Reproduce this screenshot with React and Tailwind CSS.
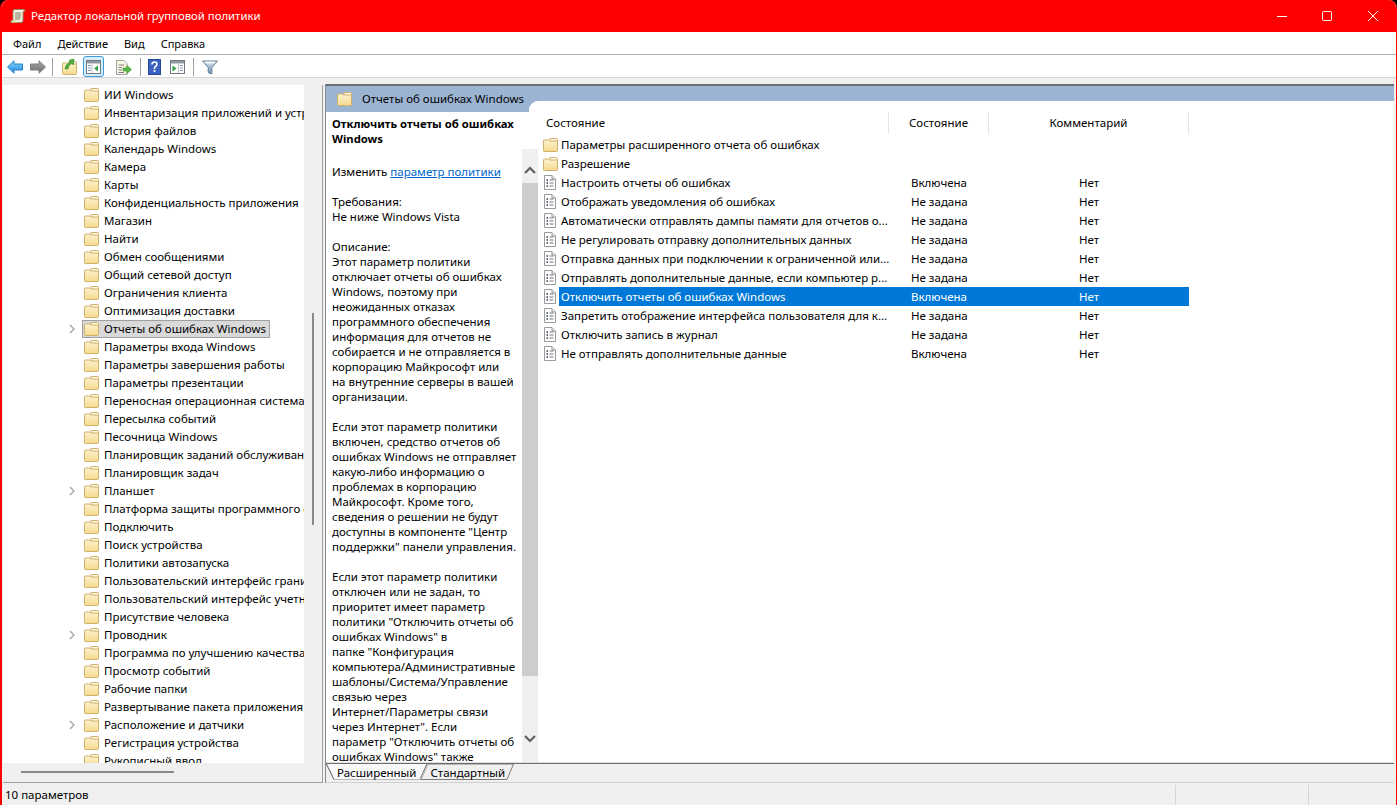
import React from "react";

const treeItems = [
  ["ИИ Windows"],
  ["Инвентаризация приложений и устройств"],
  ["История файлов"],
  ["Календарь Windows"],
  ["Камера"],
  ["Карты"],
  ["Конфиденциальность приложения"],
  ["Магазин"],
  ["Найти"],
  ["Обмен сообщениями"],
  ["Общий сетевой доступ"],
  ["Ограничения клиента"],
  ["Оптимизация доставки"],
  ["Отчеты об ошибках Windows", true, true],
  ["Параметры входа Windows"],
  ["Параметры завершения работы"],
  ["Параметры презентации"],
  ["Переносная операционная система"],
  ["Пересылка событий"],
  ["Песочница Windows"],
  ["Планировщик заданий обслуживания"],
  ["Планировщик задач"],
  ["Планшет", true],
  ["Платформа защиты программного обеспечения"],
  ["Подключить"],
  ["Поиск устройства"],
  ["Политики автозапуска"],
  ["Пользовательский интерфейс границ"],
  ["Пользовательский интерфейс учетных записей"],
  ["Присутствие человека"],
  ["Проводник", true],
  ["Программа по улучшению качества"],
  ["Просмотр событий"],
  ["Рабочие папки"],
  ["Развертывание пакета приложения"],
  ["Расположение и датчики", true],
  ["Регистрация устройства"],
  ["Рукописный ввод"],
];

const policies = [
  ["Настроить отчеты об ошибках", "Включена"],
  ["Отображать уведомления об ошибках", "Не задана"],
  ["Автоматически отправлять дампы памяти для отчетов о...", "Не задана"],
  ["Не регулировать отправку дополнительных данных", "Не задана"],
  ["Отправка данных при подключении к ограниченной или...", "Не задана"],
  ["Отправлять дополнительные данные, если компьютер р...", "Не задана"],
  ["Отключить отчеты об ошибках Windows", "Включена", true],
  ["Запретить отображение интерфейса пользователя для к...", "Не задана"],
  ["Отключить запись в журнал", "Не задана"],
  ["Не отправлять дополнительные данные", "Включена"],
];

const descLines = [
  "Требования:", "Не ниже Windows Vista", "", "Описание:",
  "Этот параметр политики", "отключает отчеты об ошибках", "Windows, поэтому при",
  "неожиданных отказах", "программного обеспечения", "информация для отчетов не",
  "собирается и не отправляется в", "корпорацию Майкрософт или", "на внутренние серверы в вашей",
  "организации.", "",
  "Если этот параметр политики", "включен, средство отчетов об", "ошибках Windows не отправляет",
  "какую-либо информацию о", "проблемах в корпорацию", "Майкрософт. Кроме того,",
  "сведения о решении не будут", "доступны в компоненте \"Центр", "поддержки\" панели управления.", "",
  "Если этот параметр политики", "отключен или не задан, то", "приоритет имеет параметр",
  "политики \"Отключить отчеты об", "ошибках Windows\" в", "папке \"Конфигурация",
  "компьютера/Административные", "шаблоны/Система/Управление", "связью через",
  "Интернет/Параметры связи", "через Интернет\". Если", "параметр \"Отключить отчеты об",
  "ошибках Windows\" также",
];

function Folder() {
  return (
    <svg viewBox="0 0 15 14" className="w-[15px] h-[14px] shrink-0">
      <defs>
        <linearGradient id="folderBody" x1="0" y1="0" x2="0" y2="1">
          <stop offset="0" stopColor="#fdf3cd" />
          <stop offset="1" stopColor="#f6d98f" />
        </linearGradient>
      </defs>
      <path d="M7 0.5 H13.5 Q14.5 0.5 14.5 1.5 V4 H7 Z" fill="#fffbe9" stroke="#cfb06a" />
      <path d="M0.5 3 Q0.5 2 1.5 2 H5.5 L7 3 H14.5 V12.5 Q14.5 13.5 13.5 13.5 H1.5 Q0.5 13.5 0.5 12.5 Z" fill="url(#folderBody)" stroke="#cfb06a" />
    </svg>
  );
}

function PolicyIcon() {
  return (
    <svg viewBox="0 0 12 15" className="w-[12px] h-[15px] shrink-0">
      <path d="M0.5 0.5 H8 L11.5 4 V14.5 H0.5 Z" fill="#fff" stroke="#9a9a9a" />
      <path d="M8 0.5 V4 H11.5" fill="#e8e8e8" stroke="#9a9a9a" />
      <path d="M2.5 5 H4 M2.5 8 H4 M2.5 11 H4" stroke="#2f3a4a" strokeWidth="1.3" />
      <path d="M5.5 5 H9.5 M5.5 8 H9.5 M5.5 11 H9.5" stroke="#6c7480" />
    </svg>
  );
}

function Chevron() {
  return (
    <svg viewBox="0 0 6 10" className="w-[6px] h-[10px]">
      <path d="M1 1 L5 5 L1 9" fill="none" stroke="#a6a6a6" strokeWidth="1.4" />
    </svg>
  );
}

function ToolbarSep({ className }) {
  return <div className={"w-px h-[18px] bg-[#a0a0a0] shrink-0 " + className} />;
}

function Toolbar() {
  return (
    <div className="flex items-center h-[23px] pl-[5px] pt-[2px] border-b border-[#d5d5d5] bg-white shrink-0">
      <svg viewBox="0 0 16 14" className="w-[16px] h-[14px]">
        <defs>
          <linearGradient id="backBlue" x1="0" y1="0" x2="0" y2="1">
            <stop offset="0" stopColor="#8ad6fb" />
            <stop offset="1" stopColor="#1b86dd" />
          </linearGradient>
          <linearGradient id="fwdGray" x1="0" y1="0" x2="0" y2="1">
            <stop offset="0" stopColor="#a8a8a8" />
            <stop offset="1" stopColor="#6f6f6f" />
          </linearGradient>
          <linearGradient id="filterBlue" x1="0" y1="0" x2="0" y2="1">
            <stop offset="0" stopColor="#d5e3ee" />
            <stop offset="1" stopColor="#6f93b0" />
          </linearGradient>
        </defs>
        <path d="M0.5 7 L7 0.8 V4 H15.5 V10 H7 V13.2 Z" fill="url(#backBlue)" stroke="#2a86c9" strokeLinejoin="round" />
      </svg>
      <svg viewBox="0 0 16 14" className="w-[16px] h-[14px] ml-[7px]">
        <path d="M15.5 7 L9 0.8 V4 H0.5 V10 H9 V13.2 Z" fill="url(#fwdGray)" stroke="#808080" strokeLinejoin="round" />
      </svg>
      <ToolbarSep className="ml-[6px]" />
      <div className="relative ml-[9px] mt-[2px]">
        <Folder />
        <svg viewBox="0 0 11 12" className="absolute left-[2px] -top-[3px] w-[11px] h-[12px]">
          <path d="M1 11 Q1.5 6 5 5 H5.5 V2 L10 1 L9.5 6.5 L7.5 5.5 Q4.5 7 4 11 Z" fill="#4eae3c" stroke="#2f7f25" strokeWidth="0.5" />
        </svg>
      </div>
      <div className="ml-[6px] w-[21px] h-[21px] rounded-[3px] border border-[#3c9be0] bg-[#d6ecfb] flex items-center justify-center shrink-0 -mt-[1px]">
        <svg viewBox="0 0 15 14" className="w-[15px] h-[14px]">
          <rect x="0.5" y="0.5" width="14" height="13" fill="#fff" stroke="#6f7a85" />
          <rect x="1" y="1" width="13" height="2.5" fill="#8d98a3" />
          <path d="M2 5.5 H5 M2 8 H5 M2 10.5 H5" stroke="#7d96b0" />
          <path d="M6 4 V13" stroke="#b9c2cb" />
          <path d="M8 8.5 L12 5.5 V11.5 Z" fill="#2e9e3e" />
        </svg>
      </div>
      <svg viewBox="0 0 16 15" className="w-[16px] h-[15px] ml-[12px]">
        <path d="M0.5 0.5 H8 L11 3.5 V14.5 H0.5 Z" fill="#faf6e4" stroke="#a3a3a3" />
        <path d="M2.5 5 H8 M2.5 7.5 H6 M2.5 10 H6 M2.5 12.5 H8" stroke="#7f7f7f" />
        <path d="M7 8 H11 V5.5 L15.5 9.5 L11 13.5 V11 H7 Z" fill="#58b847" stroke="#3f9433" strokeWidth="0.6" />
      </svg>
      <ToolbarSep className="ml-[8px]" />
      <svg viewBox="0 0 13 16" className="w-[13px] h-[16px] ml-[7px]">
        <rect width="13" height="16" fill="#24479c" />
        <rect x="1" y="1" width="11" height="14" fill="#3a63c2" />
        <path d="M4 5.5 Q4 3 6.5 3 Q9 3 9 5.2 Q9 6.5 7.3 7.5 Q6.5 8 6.5 10" fill="none" stroke="#fff" strokeWidth="1.6" />
        <rect x="5.6" y="11" width="1.8" height="2" fill="#fff" />
      </svg>
      <svg viewBox="0 0 15 14" className="w-[15px] h-[14px] ml-[9px]">
        <rect x="0.5" y="0.5" width="14" height="13" fill="#fff" stroke="#6f7a85" />
        <rect x="1" y="1" width="13" height="2.5" fill="#8d98a3" />
        <path d="M2.5 5.5 L6.5 8.5 L2.5 11.5 Z" fill="#2e9e3e" />
        <path d="M8.5 4 V13" stroke="#b9c2cb" />
        <path d="M10 5.5 H13 M10 8 H13 M10 10.5 H13" stroke="#7d96b0" />
      </svg>
      <ToolbarSep className="ml-[8px]" />
      <svg viewBox="0 0 16 15" className="w-[16px] h-[15px] ml-[8px]">
        <path d="M0.5 1 H15.5 L9.8 7.5 V14 L6.2 12.5 V7.5 Z" fill="url(#filterBlue)" stroke="#5f7d97" />
        <ellipse cx="8" cy="2.4" rx="5.5" ry="1" fill="#f2f7fb" />
      </svg>
    </div>
  );
}

function TreePane() {
  return (
    <div className="w-[320px] ml-[1px] mt-[1px] shrink-0 flex flex-col border-r border-b border-[#a0a0a0] bg-[#f0f0f0]">
      <div className="flex h-[678px]">
        <div className="w-[301px] bg-white overflow-hidden pt-px shrink-0">
          {treeItems.map(([name, expandable, selected]) => (
            <div key={name} className="flex items-center h-[18px]">
              <div className="w-[79px] pl-[66px] shrink-0 flex items-center">
                {expandable && <Chevron />}
              </div>
              <div className={"flex items-center h-[18px] pl-px pr-[3px] border " + (selected ? "bg-[#d9d9d9] border-[#a0a0a0]" : "border-transparent")}>
                <Folder />
                <span className="ml-[5px] whitespace-nowrap">{name}</span>
              </div>
            </div>
          ))}
        </div>
        <div className="w-[12px] pt-[228px] pl-[8px] shrink-0">
          <div className="w-[2px] h-[212px] bg-[#8a8a8a]" />
        </div>
      </div>
      <div className="h-[18px] pt-[8px] pl-[18px]">
        <div className="h-[2px] w-[153px] bg-[#8a8a8a]" />
      </div>
    </div>
  );
}

function DescPane() {
  return (
    <div className="w-[212px] shrink-0 flex flex-col">
      <div className="flex h-[26px] shrink-0">
        <div className="w-[203px] bg-[#9bb4d2] flex items-center pl-[11px]">
          <Folder />
          <span className="ml-[10px] whitespace-nowrap">Отчеты об ошибках Windows</span>
        </div>
        <div className="w-[9px] bg-[#9bb4d2] pt-[15px]">
          <div className="h-[11px] bg-white rounded-tl-[10px]" />
        </div>
      </div>
      <div className="flex-1 flex bg-white overflow-hidden">
        <div className="w-[196px] pl-[6px] pt-[4px] whitespace-nowrap leading-[15px] overflow-hidden">
          <div className="font-bold text-[11.3px]">Отключить отчеты об ошибках</div>
          <div className="font-bold text-[11.3px]">Windows</div>
          <div className="mt-[18px]">
            Изменить <span className="text-[#0066cc] underline">параметр политики</span>
          </div>
          <div className="h-[15px]" />
          {descLines.map((line, i) => (
            <div key={i} className="h-[15px]">{line}</div>
          ))}
        </div>
        <div className="w-[16px] mt-[37px] bg-[#f0f0f0] flex flex-col items-center shrink-0">
          <div className="h-[34px] flex items-center pt-[8px] justify-center">
            <svg viewBox="0 0 12 8" className="w-[12px] h-[8px]">
              <path d="M1 7 L6 2 L11 7" fill="none" stroke="#606060" strokeWidth="2.2" />
            </svg>
          </div>
          <div className="w-full h-[493px] bg-[#cdcdcd] shrink-0" />
          <div className="mt-[59px]">
            <svg viewBox="0 0 12 8" className="w-[12px] h-[8px]">
              <path d="M1 1 L6 6 L11 1" fill="none" stroke="#606060" strokeWidth="2.2" />
            </svg>
          </div>
        </div>
      </div>
    </div>
  );
}

function ListPane() {
  return (
    <div className="flex-1 flex flex-col bg-[#9bb4d2] pt-[15px] min-w-0">
      <div className="flex-1 bg-white pt-[11px]">
        <div className="flex h-[22px] items-center">
          <div className="w-[351px] h-full pl-[8px] flex items-center border-r border-[#e5e5e5]">Состояние</div>
          <div className="w-[100px] h-full pl-[20px] flex items-center border-r border-[#e5e5e5]">Состояние</div>
          <div className="w-[200px] h-full flex items-center justify-center border-r border-[#e5e5e5]">Комментарий</div>
        </div>
        <div className="pt-[1px]">
          {["Параметры расширенного отчета об ошибках", "Разрешение"].map((name) => (
            <div key={name} className="flex items-center h-[19px] pl-[5px]">
              <Folder />
              <span className="ml-[3px] whitespace-nowrap">{name}</span>
            </div>
          ))}
          {policies.map(([name, state, selected]) => (
            <div key={name} className="flex items-center h-[19px] pl-[6px] w-[651px]">
              <PolicyIcon />
              <div className={"flex items-center h-[19px] ml-[3px] flex-1 pl-[2px] " + (selected ? "bg-[#0078d7] text-white" : "")}>
                <span className="w-[350px] whitespace-nowrap">{name}</span>
                <span className="w-[168px] whitespace-nowrap">{state}</span>
                <span>Нет</span>
              </div>
            </div>
          ))}
        </div>
      </div>
    </div>
  );
}

function TabStrip() {
  return (
    <div className="relative h-[20px] border-t border-t-[#6d6d6d] border-b border-b-[#d0d0d0] flex items-center pl-[11px] shrink-0">
      <svg className="absolute left-0 top-0 w-[200px] h-[18px]" viewBox="0 0 200 18">
        <path d="M0.5 0 L8 15.5 H95 L102 0 H187.5 L181 15.5 H95" fill="none" stroke="#7d7d7d" />
        <path d="M8 15.5 H95 L102 0 H0.5 Z" fill="#f8f8f8" />
        <path d="M0.5 0 L8 15.5" fill="none" stroke="#6d6d6d" />
        <path d="M95 15.5 Q94 14.5 95 13 L101 0" fill="none" stroke="#6d6d6d" />
      </svg>
      <span className="relative whitespace-nowrap">Расширенный</span>
      <span className="relative whitespace-nowrap ml-[14px]">Стандартный</span>
    </div>
  );
}

export default function App() {
  return (
    <div
      className="w-[1397px] h-[805px] flex flex-col overflow-hidden bg-black text-[11.5px] text-black"
      style={{ fontFamily: '"Noto Sans", sans-serif' }}
    >
      <div className="flex-1 flex flex-col bg-[#f0f0f0] border-l-2 border-r border-[#ff0000] rounded-t-[8px] overflow-hidden min-h-0">
        <div className="h-[32px] bg-[#ff0000] flex items-center text-white shrink-0">
          <svg viewBox="0 0 16 16" className="w-[16px] h-[16px] ml-[8px]">
            <path d="M4.5 1.5 H13 Q15 1.5 15 3 L13 3.5 V12 Q13 14.5 11 14.5 H2 Q0.5 14.5 1 13 L3 12.5 V3 Q3 1.5 4.5 1.5 Z" fill="#f5efdc" stroke="#8f8a70" />
            <path d="M5 5 H11 M5 7 H11 M5 9 H11 M5 11 H10" stroke="#7f7a66" />
            <path d="M1 13 Q5 12 7 13 V14.5 H2 Z" fill="#e9dd9c" />
          </svg>
          <span className="ml-[5px] whitespace-nowrap text-[11.35px]">Редактор локальной групповой политики</span>
          <div className="ml-auto flex items-center">
            <svg viewBox="0 0 10 10" className="w-[10px] h-[10px]"><path d="M0 5.5 H10" stroke="#fff" /></svg>
            <svg viewBox="0 0 10 10" className="w-[10px] h-[10px] ml-[35px]"><rect x="0.5" y="0.5" width="9" height="9" rx="1" fill="none" stroke="#fff" /></svg>
            <svg viewBox="0 0 10 10" className="w-[10px] h-[10px] ml-[36px] mr-[18px]"><path d="M0 0 L10 10 M10 0 L0 10" stroke="#fff" /></svg>
          </div>
        </div>
        <div className="h-[23px] bg-white border-b border-[#b0b0b0] flex items-center gap-[16px] pl-[11px] pt-[2px] shrink-0 text-[11px]">
          <span>Файл</span><span>Действие</span><span>Вид</span><span>Справка</span>
        </div>
        <Toolbar />
        <div className="flex flex-1 min-h-0 pt-[6px]">
          <TreePane />
          <div className="flex-1 flex flex-col ml-[2px] mr-[2px] border-l border-[#8a8a8a] min-w-0">
            <div className="h-[679px] border-t-2 border-t-[#6d6d6d] border-b border-b-[#e0e0e0] flex overflow-hidden shrink-0">
              <DescPane />
              <ListPane />
            </div>
            <TabStrip />
          </div>
        </div>
        <div className="h-[22px] flex items-center bg-[#f0f0f0] shrink-0 pl-[3px] pt-px">
          <span>10 параметров</span>
          <div className="ml-auto flex h-[20px]">
            <div className="w-[133px] border-l border-[#d5d5d5]" />
            <div className="w-[88px] border-l border-[#d5d5d5]" />
          </div>
        </div>
      </div>
    </div>
  );
}
